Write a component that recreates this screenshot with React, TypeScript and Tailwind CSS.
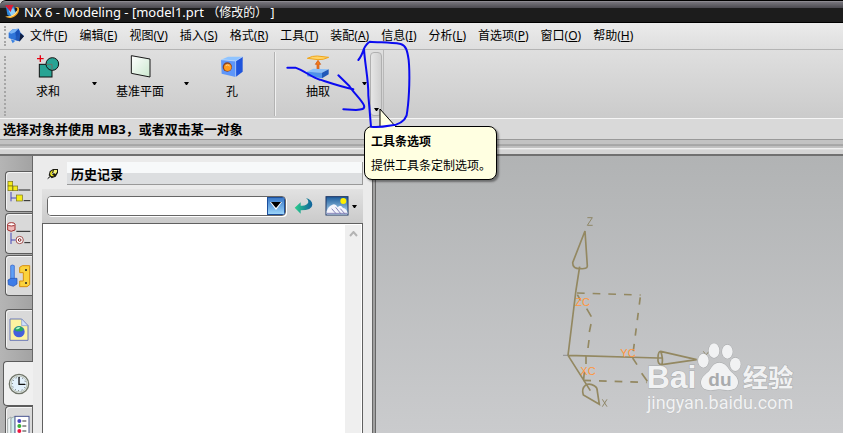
import type { ReactNode } from "react";

interface MenuEntry {
  label: string;
  hotkey: string;
}

interface ToolButtonProps {
  label: string;
  icon: ReactNode;
}

interface ResourceTabProps {
  label: string;
  icon: ReactNode;
  className?: string;
}

const menuEntries: MenuEntry[] = [
  { label: "文件", hotkey: "F" },
  { label: "编辑", hotkey: "E" },
  { label: "视图", hotkey: "V" },
  { label: "插入", hotkey: "S" },
  { label: "格式", hotkey: "R" },
  { label: "工具", hotkey: "T" },
  { label: "装配", hotkey: "A" },
  { label: "信息", hotkey: "I" },
  { label: "分析", hotkey: "L" },
  { label: "首选项", hotkey: "P" },
  { label: "窗口", hotkey: "O" },
  { label: "帮助", hotkey: "H" },
];

const AppLogo = () => (
  <svg viewBox="0 0 48 48" className="h-4 w-4 shrink-0">
    <path d="M6 8L30 8L36 26L22 40L10 32Z" fill="#2c86dc" />
    <path d="M14 20L28 12L34 26L22 36Z" fill="#8fd0fa" />
    <path d="M3 37C16 40 32 32 39 20C41 15 40 11 34 10C44 7 48 13 44 23C38 39 16 48 3 37Z" fill="#f7a823" />
    <path d="M5 38C18 39 33 31 40 18C42 27 24 43 5 38Z" fill="#fff0b4" />
    <path d="M3 4L28 2L20 24Z" fill="#d81e3a" />
  </svg>
);

const PartIcon = () => (
  <svg viewBox="0 0 48 48" className="h-4 w-4">
    <path d="M2 14L14 4L32 2L38 14L48 24L34 40L20 36L12 34L2 30Z" fill="#2f74d8" />
    <path d="M2 14L14 4L32 2L22 13L10 17Z" fill="#79b3f5" />
    <path d="M22 13L32 2L36 18L24 28Z" fill="#1b52b8" />
    <path d="M24 28L37 15L47 25L34 40L22 36Z" fill="#2158b8" />
    <path d="M37 15L48 25L34 41L36 27Z" fill="#101e40" />
    <path d="M8 34L22 38L14 46Z" fill="#3b83e2" />
  </svg>
);

const UniteIcon = () => (
  <svg viewBox="0 0 72 72" className="h-6 w-6">
    <rect x="10" y="28" width="38" height="38" fill="#27a494" stroke="#111" strokeWidth="3" />
    <circle cx="49" cy="27" r="19" fill="#27a494" stroke="#111" strokeWidth="3" />
    <path d="M31 28H48V45" fill="none" stroke="#6d7166" strokeWidth="3" />
    <path d="M13 1V21M3 11H23" stroke="#e80010" strokeWidth="4" />
  </svg>
);

const DatumPlaneIcon = () => (
  <svg viewBox="0 0 72 72" className="h-6 w-6">
    <defs>
      <linearGradient id="plane" x1="0" y1="0" x2="1" y2="1">
        <stop offset="0" stopColor="#fff" />
        <stop offset="1" stopColor="#cbe8cf" />
      </linearGradient>
    </defs>
    <path d="M10 2L66 12V66L10 55Z" fill="url(#plane)" stroke="#181818" strokeWidth="3" />
  </svg>
);

const HoleIcon = () => (
  <svg viewBox="0 0 72 72" className="h-6 w-6">
    <path d="M3 14L24 5H68L47 18Z" fill="#8fc4ff" />
    <path d="M3 14L47 18V66L5 56Z" fill="#5d96fa" />
    <path d="M47 18L68 5V50L47 66Z" fill="#1f55dc" />
    <path d="M3 14L47 18V66M47 18L68 5" fill="none" stroke="#c4e0ff" strokeWidth="2" />
    <circle cx="22" cy="36" r="14" fill="#8a4426" />
    <circle cx="23" cy="37" r="11" fill="#ff9a1f" />
    <path d="M17 32Q24 27 29 33" stroke="#ffd489" strokeWidth="3" fill="none" />
  </svg>
);

const ExtractIcon = () => (
  <svg viewBox="0 0 72 72" className="h-6 w-6">
    <path d="M4 10Q20 2 34 3L68 7Q52 15 36 14Z" fill="#ffd468" stroke="#f0a51a" strokeWidth="3" />
    <path d="M36 16L44 28H39V42H33V28H28Z" fill="#f47a1a" stroke="#c8500c" strokeWidth="2" />
    <path d="M3 50L22 41L68 43L48 53Z" fill="#8cc0f8" />
    <path d="M3 50L48 53V70L4 64Z" fill="#4f93ea" />
    <path d="M48 53L68 43V58L48 70Z" fill="#2058b8" />
  </svg>
);

const AssemblyTreeIcon = () => (
  <svg viewBox="0 0 72 72" className="h-6 w-6">
    <path d="M12 36V64M12 54H28" stroke="#4949b8" strokeWidth="3" />
    <g fill="#f4ec18" stroke="#77701a" strokeWidth="2">
      <rect x="3" y="4" width="14" height="14" />
      <rect x="3" y="18" width="14" height="14" />
      <rect x="18" y="18" width="14" height="14" />
      <rect x="28" y="45" width="18" height="18" />
    </g>
    <path d="M34 30H70M50 62H70" stroke="#222" strokeWidth="3" />
  </svg>
);

const PartNavigatorIcon = () => (
  <svg viewBox="0 0 72 72" className="h-6 w-6">
    <path d="M12 32V66M12 54H26" stroke="#4949b8" strokeWidth="3" />
    <path d="M2 8V24Q12 32 24 24V8Z" fill="#efb9b9" stroke="#a03030" strokeWidth="3" />
    <ellipse cx="13" cy="7" rx="11" ry="5" fill="#fff" stroke="#a03030" strokeWidth="3" />
    <circle cx="38" cy="54" r="11" fill="#fff" stroke="#a05050" strokeWidth="3" />
    <circle cx="38" cy="54" r="4" fill="none" stroke="#802020" strokeWidth="3" />
    <path d="M28 28H70M52 62H70" stroke="#222" strokeWidth="3" />
  </svg>
);

const ReuseLibraryIcon = () => (
  <svg viewBox="0 0 72 72" className="h-6 w-6">
    <path d="M11 5Q16 1 22 5V46H11Z" fill="#5f9ff5" stroke="#2858c4" strokeWidth="2" />
    <path d="M3 48L12 43H30V60L19 67L4 62Z" fill="#3d7ce8" stroke="#2250b0" strokeWidth="2" />
    <path d="M38 10L46 5H68V62L60 68H38V51H49V26H38Z" fill="#fbd23c" stroke="#d88e0c" strokeWidth="3" />
    <circle cx="57" cy="18" r="3" fill="#222" />
    <circle cx="57" cy="57" r="3" fill="#222" />
  </svg>
);

const WebPageIcon = () => (
  <svg viewBox="0 0 72 72" className="h-6 w-6">
    <path d="M9 3H44L63 23V67H9Z" fill="#fdf3a0" stroke="#6b79b8" strokeWidth="3" />
    <path d="M44 3V23H63Z" fill="#cfe0fa" stroke="#7f93cc" strokeWidth="2" />
    <circle cx="36" cy="41" r="17" fill="#4560dc" />
    <path d="M22 32Q36 18 50 32Q48 42 36 40Q24 42 22 32Z" fill="#28a860" />
    <path d="M26 33Q32 24 40 28Q36 36 26 33Z" fill="#b4f5d0" />
  </svg>
);

const HistoryIcon = () => (
  <svg viewBox="0 0 72 72" className="h-6 w-6">
    <circle cx="36" cy="36" r="29" fill="#f2f7fb" stroke="#6f7468" strokeWidth="4" />
    <circle cx="36" cy="36" r="24" fill="#e2f0fb" stroke="#bcc4b8" strokeWidth="3" />
    <circle cx="36" cy="36" r="20" fill="none" stroke="#222" strokeWidth="3" strokeDasharray="2 8.47" />
    <path d="M36 15V37H54" fill="none" stroke="#111" strokeWidth="4" />
  </svg>
);

const RolesIcon = () => (
  <svg viewBox="0 0 72 72" className="h-6 w-6">
    <path d="M2 12L12 6V72H2Z" fill="#eef3f4" stroke="#8b9494" strokeWidth="2" />
    <path d="M12 10L24 4V72H12Z" fill="#d4eeee" stroke="#8b9494" strokeWidth="2" />
    <rect x="24" y="4" width="42" height="72" fill="#fff" stroke="#4a5690" strokeWidth="3" />
    <circle cx="37" cy="18" r="6" fill="#4848c0" />
    <circle cx="37" cy="33" r="6" fill="#38b038" />
    <circle cx="37" cy="48" r="6" fill="#f01840" />
    <path d="M46 18H58M46 33H58M46 48H58" stroke="#333" strokeWidth="3" />
  </svg>
);

const PinIcon = () => (
  <svg viewBox="0 0 36 36" className="h-3 w-3">
    <path d="M2 32L11 24" stroke="#000" strokeWidth="3" />
    <path d="M8 10L18 3H33V14L26 26L14 31L5 22Z" fill="#1a1a10" />
    <path d="M11 11L18 7L14 18L22 25L12 24L9 18Z" fill="#f0e820" />
    <path d="M21 6H30V12L25 19L19 13Z" fill="#f4f070" />
    <path d="M15 19L21 13" stroke="#fff" strokeWidth="3" />
  </svg>
);

const ReturnIcon = () => (
  <svg viewBox="0 0 60 54" className="h-[18px] w-5">
    <defs>
      <linearGradient id="back" x1="0" y1="0" x2="1" y2="0">
        <stop offset="0" stopColor="#2cd08c" />
        <stop offset="1" stopColor="#10609c" />
      </linearGradient>
    </defs>
    <path d="M2 32L20 16V26Q38 28 43 16Q44 8 36 3Q54 8 55 23Q54 40 20 40V50Z" fill="url(#back)" />
  </svg>
);

const PictureIcon = () => (
  <svg viewBox="0 0 72 60" className="h-5 w-6">
    <defs>
      <linearGradient id="sky" x1="0" y1="0" x2="0" y2="1">
        <stop offset="0" stopColor="#1c5c9c" />
        <stop offset="1" stopColor="#c4e6fa" />
      </linearGradient>
    </defs>
    <rect x="3" y="2" width="66" height="55" fill="url(#sky)" stroke="#1c3464" strokeWidth="3" />
    <path d="M5 46Q10 30 22 26Q32 22 38 34Q46 24 54 36Q62 36 67 48V55H5Z" fill="#f4f4fc" />
    <path d="M20 38L34 54M32 34L48 54M46 38L60 54M5 52H67" stroke="#8484b8" strokeWidth="3" />
    <circle cx="55" cy="15" r="9" fill="#fff000" />
  </svg>
);

const CaretDown = () => (
  <svg viewBox="0 0 5 3" className="h-[3px] w-[5px]">
    <path d="M0 0H5L3 3H2Z" fill="#000" />
  </svg>
);

const ToolButton = ({ label, icon }: ToolButtonProps) => (
  <button type="button" className="flex h-12 w-[82px] flex-col items-center gap-[3px]">
    {icon}
    <span className="leading-5">{label}</span>
  </button>
);

const DropArrow = ({ label }: { label: string }) => (
  <button type="button" aria-label={label} className="flex h-14 w-[10px] items-center justify-center">
    <CaretDown />
  </button>
);

const ResourceTab = ({ label, icon, className = "" }: ResourceTabProps) => (
  <button
    type="button"
    aria-label={label}
    className={`flex h-[41px] w-[27px] shrink-0 items-center justify-center rounded-l border border-r-0 border-[#5c5c5c] bg-[#d9d9d9] shadow-[inset_1px_1px_0_#f4f4f4] ${className}`}
  >
    {icon}
  </button>
);

const TitleBar = () => (
  <header className="flex h-[23px] items-center gap-1 rounded-tl-md border-y border-black bg-[linear-gradient(#a09ea4_0px,#77757c_1px,#4b4a50_7px,#1c1c1c_7px)] pl-1 text-white">
    <AppLogo />
    <h1 className="whitespace-pre text-[13px] leading-5">
      NX 6 - Modeling - [model1.prt <span className="text-xs">（修改的） ]</span>
    </h1>
  </header>
);

const MenuBar = () => (
  <nav className="flex h-[27px] items-center border-b border-[#b4b4b4] bg-gradient-to-b from-[#ebebeb] to-[#dedede] pl-1">
    <div className="h-5 border-l-2 border-dotted border-[#a6a6a6]" />
    <div className="mr-[6px] ml-[2px]">
      <PartIcon />
    </div>
    <ul className="flex gap-3">
      {menuEntries.map(({ label, hotkey }) => (
        <li key={hotkey}>
          <button type="button" className="whitespace-nowrap leading-5">
            {label}(<u>{hotkey}</u>)
          </button>
        </li>
      ))}
    </ul>
  </nav>
);

const Toolbar = () => (
  <div className="flex h-[68px] bg-gradient-to-b from-[#dfdfdf] to-[#cbcbcb] pl-1">
    <div className="mt-[6px] mr-px h-[60px] border-l-2 border-dotted border-[#a6a6a6]" />
    <div className="flex pt-[5px]">
      <ToolButton label="求和" icon={<UniteIcon />} />
      <DropArrow label="求和选项" />
      <ToolButton label="基准平面" icon={<DatumPlaneIcon />} />
      <DropArrow label="基准平面选项" />
      <ToolButton label="孔" icon={<HoleIcon />} />
    </div>
    <div className="mx-px my-[2px] w-[2px] border-r border-[#f0f0f0] bg-[#b2b2b2]" />
    <div className="flex pt-[5px]">
      <ToolButton label="抽取" icon={<ExtractIcon />} />
      <DropArrow label="抽取选项" />
    </div>
    <button
      type="button"
      aria-label="工具条选项"
      className="my-[2px] ml-px flex w-3 items-end justify-center rounded-sm border border-[#b0b0b0] bg-gradient-to-r from-[#e6e6e6] to-[#d0d0d0] pb-1"
    >
      <CaretDown />
    </button>
    <div className="ml-px border-r border-[#b8b8b8]" />
  </div>
);

const OptionsTooltip = () => (
  <div
    role="tooltip"
    className="absolute top-[126px] left-[364px] h-[54px] w-[133px] rounded-lg border border-black bg-[#ffffe1] px-[6px] pt-[3px] shadow-[2px_2px_2px_#0006]"
  >
    <svg viewBox="0 0 18 20" className="absolute bottom-[51px] left-[14px] h-5 w-[18px]">
      <path d="M1 20V1L17 19V20Z" fill="#ffffe1" />
      <path d="M1 19V1L17 19" fill="none" stroke="#000" />
    </svg>
    <p className="leading-6 font-bold">工具条选项</p>
    <p className="leading-6 whitespace-nowrap">提供工具条定制选项。</p>
  </div>
);

const PenMarks = () => (
  <svg viewBox="0 0 840 570" className="pointer-events-none absolute top-0 left-[270px] h-[190px] w-[280px]">
    <g fill="none" stroke="#0b0bf0" strokeWidth="6" strokeLinecap="round" strokeLinejoin="round">
      <path d="M52 203H76C104 212 124 232 150 239C184 250 216 261 250 268" />
      <path d="M205 226L238 258C250 278 272 296 282 316C286 328 274 329 258 330L220 328" />
      <path d="M265 180C274 170 278 158 282 146C284 190 296 240 295 286L303 380C332 384 360 376 378 374C400 366 412 352 412 332C418 290 420 220 416 180C412 152 408 136 392 132C358 126 326 128 300 125C290 130 286 138 282 146" />
    </g>
  </svg>
);

const ResourceBar = () => (
  <aside className="flex w-[33px] flex-col items-end border-r border-[#666] bg-gradient-to-r from-[#b5b5b5] to-[#a3a3a3] pt-[15px]">
    <ResourceTab label="装配导航器" icon={<AssemblyTreeIcon />} />
    <ResourceTab label="部件导航器" icon={<PartNavigatorIcon />} className="mt-px" />
    <ResourceTab label="重用库" icon={<ReuseLibraryIcon />} className="mt-px" />
    <ResourceTab label="浏览器" icon={<WebPageIcon />} className="mt-[13px]" />
    <button
      type="button"
      aria-label="历史记录"
      className="-mr-px mt-[11px] flex h-[45px] w-[30px] shrink-0 items-center justify-center rounded-l border border-r-0 border-[#5c5c5c] bg-[#f0f0f0]"
    >
      <HistoryIcon />
    </button>
    <ResourceTab label="角色" icon={<RolesIcon />} />
  </aside>
);

const HistoryPanel = () => (
  <section className="flex w-[339px] flex-col bg-[#ebebeb] pt-[6px] pr-[9px] pl-[9px]">
    <div className="flex items-center">
      <button type="button" aria-label="固定" className="mr-2 ml-[5px]">
        <PinIcon />
      </button>
      <h2 className="h-[23px] flex-1 border-r border-b border-[#999] bg-[linear-gradient(#f7f9fa_50%,#dcdee0_50%)] pl-1 text-[13px] leading-6 font-bold">
        历史记录
      </h2>
    </div>
    <div className="mt-1 flex h-[34px] items-center bg-gradient-to-b from-[#e2e2e2] to-[#cacaca] pl-[5px]">
      <div className="flex h-5 w-[239px] overflow-hidden rounded border border-[#666] bg-white shadow-[1px_1px_0_#fff]">
        <input type="text" aria-label="历史记录搜索" className="min-w-0 flex-1 bg-white px-1 outline-none" />
        <button
          type="button"
          aria-label="展开"
          className="flex w-[18px] items-center justify-center border border-[#1c4f9c] bg-gradient-to-b from-[#3b7ac8] to-[#9ad4fa]"
        >
          <svg viewBox="0 0 12 8" className="h-2 w-3">
            <path d="M0 0H12L6 8Z" fill="#fff" />
            <path d="M1 0H11L6 6Z" fill="#000" />
          </svg>
        </button>
      </div>
      <button type="button" aria-label="返回" className="ml-2">
        <ReturnIcon />
      </button>
      <button type="button" aria-label="视图样式" className="ml-[11px] flex items-center gap-[3px]">
        <PictureIcon />
        <CaretDown />
      </button>
    </div>
    <div className="flex flex-1 justify-end border border-b-0 border-[#606060] bg-white pt-px pr-px">
      <div className="flex w-4 justify-center bg-[#efefef] pt-[6px]">
        <svg viewBox="0 0 9 6" className="h-[6px] w-[9px]">
          <path d="M1 5L4.500 1L8 5" fill="none" stroke="#b4b4b4" strokeWidth="2" />
        </svg>
      </div>
    </div>
  </section>
);

const CoordinateSystem = () => (
  <svg viewBox="0 0 909 699" className="absolute top-11 left-[164px] h-[233px] w-[303px]">
    <g fill="none" stroke="#938861" strokeWidth="5">
      <path d="M84 466L108 270L119 200M84 466L354 474M84 466L151 572" />
      <path d="M135 93L98 188Q98 206 120 206Q142 208 142 198Z" />
      <path d="M362 454L470 479L366 494Q352 494 354 474Q354 454 362 454ZM354 474H368M362 454Q370 474 366 494" />
      <path d="M178 613L130 585Q124 566 136 556Q148 548 164 558Q172 562 172 574Z" />
      <path d="M111 279L302 285" strokeDasharray="23 24" />
      <path d="M301 290L278 468" strokeDasharray="22 25" strokeDashoffset="-2" />
      <path d="M112 284L122 302M140 326L154 350M153 372L148 396M147 420L144 444M138 468V492M133 516L131 538" />
      <path d="M278 474L291 494M305 520L322 544" />
      <path d="M130 541L320 547" strokeDasharray="23 24" />
    </g>
    <path d="M69 466H84" stroke="#777" strokeWidth="2" />
    <g fill="none" stroke="#8f8768" strokeWidth="3">
      <path d="M142 53H157L142 76H158" />
      <path d="M187 598L201 620M201 598L187 620" />
      <path d="M490 454L498 465L507 454M498 465V475" />
    </g>
    <g fill="#ff963c" className="font-['Liberation_Sans',sans-serif] text-[33px]">
      <text x="106" y="317">ZC</text>
      <text x="241" y="470">YC</text>
      <text x="121" y="526">XC</text>
    </g>
  </svg>
);

const Watermark = () => (
  <svg viewBox="0 0 480 240" className="absolute top-[183px] left-[264px] h-20 w-40">
    <g transform="translate(-300 -417)" fill="#f1f2f3" stroke="#a9abad" strokeWidth="3" paintOrder="stroke">
      <ellipse cx="522" cy="452" rx="16" ry="22" />
      <ellipse cx="562" cy="455" rx="16" ry="21" />
      <ellipse cx="490" cy="482" rx="16" ry="21" />
      <ellipse cx="586" cy="493" rx="16" ry="20" />
      <path d="M538 488C554 488 562 500 570 512C582 524 596 532 594 550C590 574 566 572 538 568C510 572 486 574 483 550C482 532 496 524 508 512C516 500 522 488 538 488Z" />
      <text x="320" y="565" className="font-['Liberation_Sans',sans-serif] text-[96px] font-bold">Bai</text>
      <text x="608" y="561" className="font-['Noto_Sans_CJK_SC',sans-serif] text-[76px] font-bold">经验</text>
      <text x="321" y="627" strokeWidth="1" className="font-['Roboto',sans-serif] text-[54px]">jingyan.baidu.com</text>
      <text x="505" y="559" fill="#a9abad" stroke="none" className="font-['Liberation_Sans',sans-serif] text-[57px] font-bold">du</text>
    </g>
  </svg>
);

export default function App() {
  return (
    <div className="relative flex h-screen min-h-96 flex-col overflow-hidden bg-[#d8d8d8] font-['Noto_Sans','Noto_Sans_CJK_SC',sans-serif] text-xs text-black">
      <TitleBar />
      <MenuBar />
      <Toolbar />
      <div className="flex h-[21px] items-center border-t border-[#f6f6f6] bg-[#d9d9d9] pl-[3px] text-[13px] font-bold">
        <p className="leading-5">选择对象并使用 MB3，或者双击某一对象</p>
      </div>
      <div className="h-[17px] border-t border-b-2 border-t-[#999] border-b-[#707070] bg-[linear-gradient(#c2c2c2_4px,#8e8e8e_5px,#bdbdbd_6px,#c4c4c4_8px,#f8f8f8_8px,#d4d4d4_10px)]" />
      <main className="flex min-h-0 flex-1">
        <ResourceBar />
        <HistoryPanel />
        <div className="w-1 border-x border-[#666] bg-[#a0a0a0]" />
        <section aria-label="图形窗口" className="relative flex-1 overflow-hidden bg-gradient-to-b from-[#b1b3b4] to-[#cacbcd]">
          <CoordinateSystem />
          <Watermark />
        </section>
      </main>
      <OptionsTooltip />
      <PenMarks />
    </div>
  );
}
